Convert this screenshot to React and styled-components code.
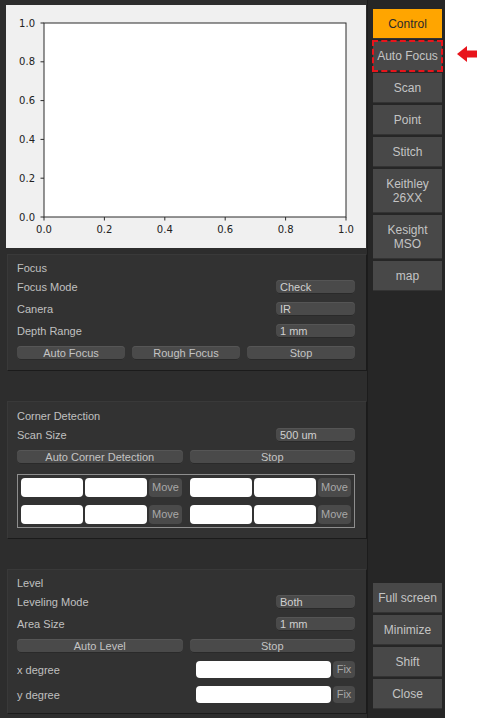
import React from 'react';
import styled, { createGlobalStyle } from 'styled-components';

const GlobalStyle = createGlobalStyle`
  html, body {
    margin: 0;
    padding: 0;
    background: #ffffff;
  }
  body {
    font-family: "Liberation Sans", Arial, sans-serif;
  }
`;

const navItems = [
  { label: 'Control', active: true },
  { label: 'Auto Focus', marked: true },
  { label: 'Scan' },
  { label: 'Point' },
  { label: 'Stitch' },
  { label: 'Keithley\n26XX', tall: true },
  { label: 'Kesight\nMSO', tall: true },
  { label: 'map' },
];

const windowItems = ['Full screen', 'Minimize', 'Shift', 'Close'];

const yTicks = [0, 0.2, 0.4, 0.6, 0.8, 1.0];
const xTicks = [0, 0.2, 0.4, 0.6, 0.8, 1.0];

// axes box inside the figure
const AX = { left: 38, right: 340, top: 18, bottom: 212 };

function EmptyPlot() {
  const w = AX.right - AX.left;
  const h = AX.bottom - AX.top;
  return (
    <PlotFrame>
      <svg width="360" height="243" viewBox="0 0 360 243">
        <rect x={AX.left} y={AX.top} width={w} height={h} fill="#fff" stroke="#2b2b2b" strokeWidth="1" />
        {yTicks.map((v) => {
          const y = AX.bottom - v * h;
          return (
            <g key={'y' + v}>
              <line x1={AX.left - 3.5} x2={AX.left} y1={y} y2={y} stroke="#2b2b2b" />
              <text x={AX.left - 9} y={y + 3.6} textAnchor="end" fontSize="10" fill="#222" fontFamily="DejaVu Sans, sans-serif">
                {v.toFixed(1)}
              </text>
            </g>
          );
        })}
        {xTicks.map((v) => {
          const x = AX.left + v * w;
          return (
            <g key={'x' + v}>
              <line x1={x} x2={x} y1={AX.bottom} y2={AX.bottom + 3.5} stroke="#2b2b2b" />
              <text x={x} y={AX.bottom + 16} textAnchor="middle" fontSize="10" fill="#222" fontFamily="DejaVu Sans, sans-serif">
                {v.toFixed(1)}
              </text>
            </g>
          );
        })}
      </svg>
    </PlotFrame>
  );
}

function FieldRow({ label, value }) {
  return (
    <Row>
      <Label>{label}</Label>
      <Combo>{value}</Combo>
    </Row>
  );
}

function CornerPair() {
  return (
    <Pair>
      <TextBox />
      <TextBox />
      <SmallButton>Move</SmallButton>
    </Pair>
  );
}

function DegreeRow({ label }) {
  return (
    <DegreeLine>
      <Label>{label}</Label>
      <Spacer />
      <WideBox />
      <SmallButton $w={22} $h={17}>Fix</SmallButton>
    </DegreeLine>
  );
}

export default function App() {
  return (
    <>
      <GlobalStyle />
      <Page>
        <Window>
          <MainColumn>
            <EmptyPlot />

            <Panel $mt={6}>
              <Title>Focus</Title>
              <FieldRow label="Focus Mode" value="Check" />
              <FieldRow label="Canera" value="IR" />
              <FieldRow label="Depth Range" value="1 mm" />
              <ButtonGrid $cols={3}>
                <PanelButton>Auto Focus</PanelButton>
                <PanelButton>Rough Focus</PanelButton>
                <PanelButton>Stop</PanelButton>
              </ButtonGrid>
            </Panel>

            <Panel $mt={30} $pt={7}>
              <Title>Corner Detection</Title>
              <FieldRow label="Scan Size" value="500 um" />
              <ButtonGrid $cols={2}>
                <PanelButton>Auto Corner Detection</PanelButton>
                <PanelButton>Stop</PanelButton>
              </ButtonGrid>
              <CornerBox>
                <CornerRow>
                  <CornerPair />
                  <CornerPair />
                </CornerRow>
                <CornerRow>
                  <CornerPair />
                  <CornerPair />
                </CornerRow>
              </CornerBox>
            </Panel>

            <Panel $mt={30}>
              <Title>Level</Title>
              <FieldRow label="Leveling Mode" value="Both" />
              <FieldRow label="Area Size" value="1 mm" />
              <ButtonGrid $cols={2}>
                <PanelButton>Auto Level</PanelButton>
                <PanelButton>Stop</PanelButton>
              </ButtonGrid>
              <DegreeRow label="x degree" />
              <DegreeRow label="y degree" />
            </Panel>
          </MainColumn>

          <SideBar>
            <NavGroup>
              {navItems.map((item) => (
                <NavButton key={item.label} $active={item.active} $marked={item.marked} $tall={item.tall}>
                  {item.label}
                </NavButton>
              ))}
            </NavGroup>
            <NavGroup>
              {windowItems.map((label) => (
                <NavButton key={label}>{label}</NavButton>
              ))}
            </NavGroup>
          </SideBar>
        </Window>

        <Margin>
          <svg width="20" height="16" viewBox="0 0 20 16">
            <polygon points="0,8 10,0 10,4.5 20,4.5 20,11.5 10,11.5 10,16" fill="#e8141b" />
          </svg>
        </Margin>
      </Page>
    </>
  );
}

const Page = styled.div`
  display: flex;
  width: 488px;
  height: 718px;
  overflow: hidden;
`;

const Window = styled.div`
  display: flex;
  width: 445px;
  height: 718px;
  background: #2d2d2d;
`;

const MainColumn = styled.div`
  display: flex;
  flex-direction: column;
  width: 367px;
  padding: 5px 0 0 6px;
  box-sizing: border-box;
`;

const PlotFrame = styled.div`
  width: 360px;
  height: 243px;
  background: #f0f0f0;
  svg {
    display: block;
  }
`;

const Panel = styled.div`
  display: flex;
  flex-direction: column;
  gap: 8px;
  width: 360px;
  margin: ${(p) => p.$mt}px 0 0 1px;
  padding: ${(p) => p.$pt || 6}px 11px 10px 9px;
  box-sizing: border-box;
  background: #323232;
  border: 1px solid #393939;
  border-right-color: #1b1b1b;
  border-bottom-color: #1b1b1b;
`;

const Title = styled.div`
  height: 14px;
  line-height: 14px;
  margin-bottom: -3px;
  font-size: 11px;
  color: #c0c0c0;
`;

const Row = styled.div`
  display: flex;
  align-items: center;
  justify-content: space-between;
  height: 14px;
`;

const Label = styled.span`
  font-size: 11px;
  color: #c0c0c0;
  white-space: nowrap;
`;

const Combo = styled.div`
  width: 79px;
  height: 14px;
  line-height: 14px;
  padding-left: 4px;
  box-sizing: border-box;
  font-size: 11px;
  color: #d0d0d0;
  background: #4a4a4a;
  border-radius: 4px;
  box-shadow: inset 0 -1px 0 #2a2a2a, inset 0 1px 0 #555;
`;

const ButtonGrid = styled.div`
  display: grid;
  grid-template-columns: repeat(${(p) => p.$cols}, 1fr);
  column-gap: 7px;
`;

const PanelButton = styled.div`
  height: 14px;
  line-height: 14px;
  text-align: center;
  font-size: 11px;
  color: #c4c4c4;
  background: #4a4a4a;
  border-radius: 4px;
  box-shadow: inset 0 -1px 0 #2a2a2a, inset 0 1px 0 #565656;
`;

const CornerBox = styled.div`
  display: flex;
  flex-direction: column;
  gap: 8px;
  margin: 2px 0 0;
  padding: 3px;
  border: 1px solid #8e8e8e;
`;

const CornerRow = styled.div`
  display: flex;
  gap: 8px;
`;

const Pair = styled.div`
  display: flex;
  flex: 1;
  gap: 2px;
`;

const TextBox = styled.div`
  flex: 1;
  height: 19px;
  background: #ffffff;
  border-radius: 4px;
`;

const SmallButton = styled.div`
  flex: none;
  width: ${(p) => p.$w || 33}px;
  height: ${(p) => p.$h || 19}px;
  line-height: ${(p) => p.$h || 19}px;
  text-align: center;
  font-size: 11px;
  color: #a8a8a8;
  background: #4a4a4a;
  border-radius: 4px;
`;

const DegreeLine = styled.div`
  display: flex;
  align-items: center;
  gap: 2px;
  height: 17px;
`;

const Spacer = styled.div`
  flex: 1;
`;

const WideBox = styled.div`
  width: 135px;
  height: 17px;
  background: #ffffff;
  border-radius: 4px;
`;

const SideBar = styled.div`
  display: flex;
  flex-direction: column;
  justify-content: space-between;
  width: 78px;
  padding: 9px 3px 9px 5px;
  box-sizing: border-box;
  background: #262626;
  border-left: 1px solid #1c1c1c;
`;

const NavGroup = styled.div`
  display: flex;
  flex-direction: column;
  gap: 2px;
`;

const NavButton = styled.div`
  display: flex;
  align-items: center;
  justify-content: center;
  height: ${(p) => (p.$tall ? 44 : 30)}px;
  white-space: pre-line;
  text-align: center;
  line-height: 14px;
  font-size: 12px;
  color: ${(p) => (p.$active ? '#2a2a2a' : '#c4c4c4')};
  background: ${(p) => (p.$active ? '#ffa500' : '#484848')};
  box-shadow: inset 0 -1px 0 #333;
  outline: ${(p) => (p.$marked ? '2px dashed #e8141b' : 'none')};
  outline-offset: -1px;
`;

const Margin = styled.div`
  flex: 1;
  padding: 46px 0 0 12px;
  background: #ffffff;
`;
